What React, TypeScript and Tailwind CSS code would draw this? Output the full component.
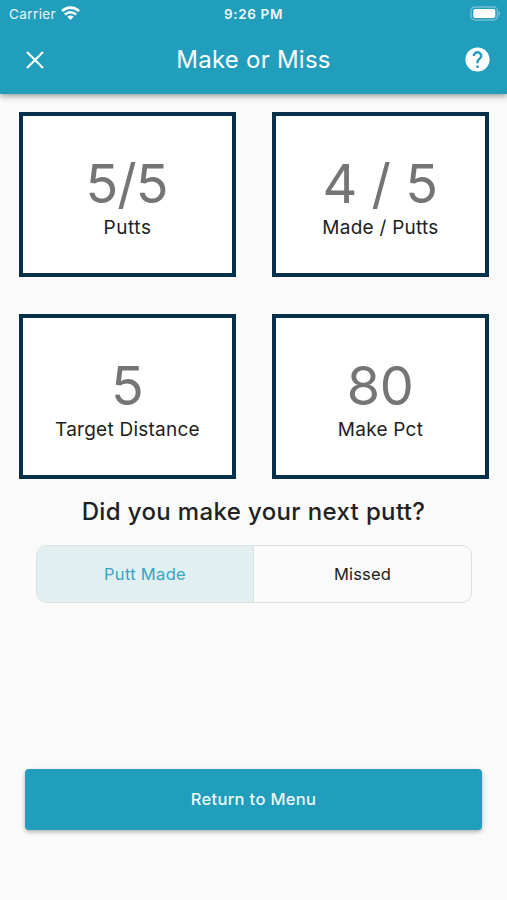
import { useState } from "react";

const stats = [
  { value: "5/5", label: "Putts", valueClass: "tracking-[-1px] pr-[2px]", labelClass: "tracking-[0.55px]" },
  { value: "4 / 5", label: "Made / Putts", valueClass: "tracking-[-0.5px] pr-[1px]", labelClass: "tracking-[0.25px]" },
  { value: "5", label: "Target Distance", valueClass: "", labelClass: "tracking-[0.25px]" },
  { value: "80", label: "Make Pct", valueClass: "tracking-[-0.5px] pr-[1px]", labelClass: "tracking-[0.25px]" },
];

function StatusBar() {
  return (
    <div className="grid h-[28px] grid-cols-3 items-center text-[13.5px] leading-[28px]">
      <div className="flex items-center gap-[5px] pl-[9px] text-white/90">
        <span className="tracking-[0.4px]">Carrier</span>
        <svg width="19" height="14" viewBox="0 0 19 14" fill="none" stroke="#fff" className="-mt-[2px]">
          <path d="M1 5.1a12.2 12.2 0 0 1 17 0" strokeWidth="2.7" />
          <path d="M4 8.5a7.8 7.8 0 0 1 11 0" strokeWidth="2.5" />
          <path d="M9.5 13.9 6.3 10.8a4.6 4.6 0 0 1 6.4 0z" fill="#fff" stroke="none" />
        </svg>
      </div>
      <span className="text-center font-semibold tracking-[0.65px] text-white/95">9:26 PM</span>
      <div className="flex justify-end pr-[6px]">
        <svg width="31" height="15" viewBox="0 0 31 15" className="-mt-[2px]">
          <rect x="1" y="1" width="26.5" height="13" rx="4" fill="none" stroke="#fff" strokeOpacity=".35" strokeWidth="1.5" />
          <rect x="3.3" y="3" width="22" height="9" rx="1.8" fill="#fff" />
          <path d="M28.8 5.4v4.2a2.4 2.4 0 0 0 0-4.2z" fill="#fff" fillOpacity=".5" />
        </svg>
      </div>
    </div>
  );
}

function Header() {
  return (
    <header className="h-[94px] bg-[#229ebd] text-white shadow-[0_2px_6px_rgba(0,0,0,0.4)]">
      <StatusBar />
      <div className="grid h-[63px] grid-cols-[42px_1fr_42px] items-center px-[14px]">
        <button aria-label="Close" className="flex justify-center">
          <svg width="20" height="20" viewBox="0 0 20 20" fill="none" stroke="#fff" strokeWidth="2.1">
            <path d="M2 2l16 16M18 2 2 18" />
          </svg>
        </button>
        <h1 className="text-center text-[24px] tracking-[0.25px]">Make or Miss</h1>
        <button aria-label="Help" className="flex justify-end pr-[1px]">
          <svg width="29" height="29" viewBox="0 0 24 24" fill="#fff">
            <path d="M12 2C6.48 2 2 6.48 2 12s4.48 10 10 10 10-4.48 10-10S17.52 2 12 2zm1 17h-2v-2h2v2zm2.07-7.75-.9.92C13.45 12.9 13 13.5 13 15h-2v-.5c0-1.1.45-2.1 1.17-2.83l1.24-1.26c.37-.36.59-.86.59-1.41 0-1.1-.9-2-2-2s-2 .9-2 2H8c0-2.21 1.79-4 4-4s4 1.79 4 4c0 .88-.36 1.68-.93 2.25z" />
          </svg>
        </button>
      </div>
    </header>
  );
}

export default function App() {
  const [made, setMade] = useState(true);

  return (
    <div className="h-[900px] w-[507px] bg-[#fafafa] font-['Inter',sans-serif] text-[#212121]">
      <Header />

      <main className="flex flex-col">
        <div className="grid grid-cols-2 gap-x-[36px] gap-y-[37px] pt-[18px] pr-[18px] pl-[19px]">
          {stats.map((s) => (
            <div
              key={s.label}
              className="flex h-[165px] flex-col items-center border-4 border-[#04304a] bg-white pt-[35px]"
            >
              <span className={`text-[54px] leading-[66px] text-[#757575] ${s.valueClass}`}>{s.value}</span>
              <span className={`text-[19px] leading-[22px] ${s.labelClass}`}>{s.label}</span>
            </div>
          ))}
        </div>

        <h2 className="mt-[17px] text-center text-[24px] leading-[32px] font-medium tracking-[0.36px]">
          Did you make your next putt?
        </h2>

        <div className="mr-[35px] ml-[36px] mt-[17px] flex h-[58px] overflow-hidden rounded-[10px] border border-[#dbe2e2] text-[16.5px]">
          <button
            onClick={() => setMade(true)}
            className={`w-[217px] border-r border-[#dbe2e2] tracking-[0.3px] ${made ? "bg-[#e1eff0] text-[#35a6c3]" : ""}`}
          >
            Putt Made
          </button>
          <button
            onClick={() => setMade(false)}
            className={`flex-1 tracking-[0.2px] ${made ? "" : "bg-[#e1eff0] text-[#35a6c3]"}`}
          >
            Missed
          </button>
        </div>

        <button className="mx-[25px] mt-[166px] h-[61px] rounded-[4px] bg-[#229ebd] text-[16.5px] font-medium tracking-[0.33px] text-white/95 shadow-[0_2px_4px_rgba(0,0,0,0.3)]">
          Return to Menu
        </button>
      </main>
    </div>
  );
}
